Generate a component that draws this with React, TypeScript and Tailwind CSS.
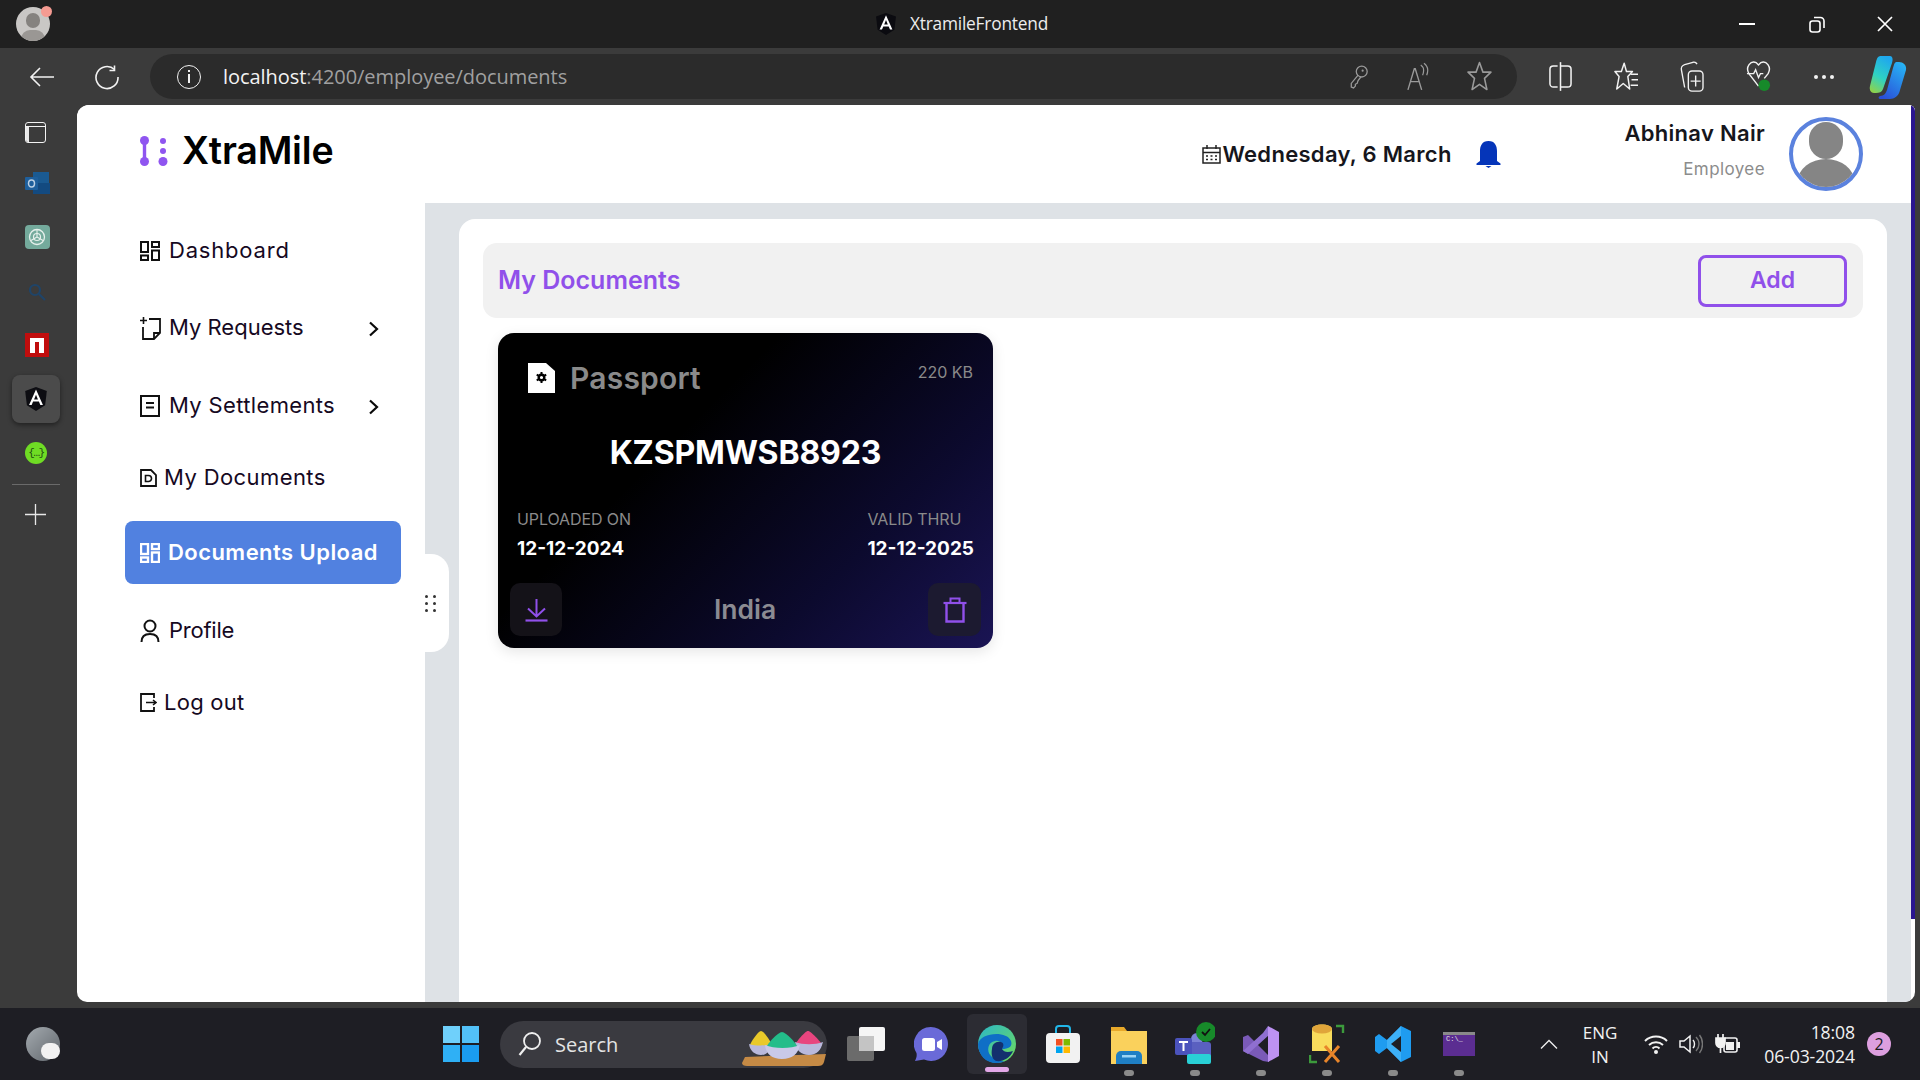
import React from "react";

const POP = "font-['Inter','Liberation_Sans',sans-serif]";

function Ic({ w, h, vb, children, cls = "" }: { w: number; h: number; vb?: string; children: React.ReactNode; cls?: string }) {
  return (
    <svg width={w} height={h} viewBox={vb ?? `0 0 ${w} ${h}`} fill="none" className={`shrink-0 ${cls}`}>
      {children}
    </svg>
  );
}

function AngularMark({ size, bg = "#0b0b10" }: { size: number; bg?: string }) {
  return (
    <Ic w={size} h={size} vb="0 0 24 24">
      <path d="M12 1 2 4.6l1.6 13.2L12 23l8.4-5.2L22 4.6z" fill={bg} />
      <path d="M12 3.2 5.6 17.6h2.4l1.3-3.2h5.4l1.3 3.2h2.4zm-1.8 9.2L12 8l1.8 4.4z" fill="#fff" />
    </Ic>
  );
}

function TitleBar() {
  return (
    <div className="h-[48px] bg-[#202020] flex items-center relative shrink-0">
      <div className="ml-[16px] relative w-[34px] h-[34px] rounded-full bg-[#c9c7c5] overflow-hidden">
        <div className="absolute left-[10px] top-[6px] w-[14px] h-[15px] rounded-full bg-[#85827f]" />
        <div className="absolute left-[5px] top-[23px] w-[24px] h-[18px] rounded-full bg-[#9a9794]" />
      </div>
      <div className="absolute left-[41px] top-[6px] w-[11px] h-[11px] rounded-full bg-[#f59b92]" />
      <div className="flex-1 flex items-center justify-center gap-[12px] pl-[156px]">
        <AngularMark size={24} />
        <span className="font-['Open_Sans',sans-serif] text-[17.3px] text-[#ededed] tracking-[-0.2px]">XtramileFrontend</span>
      </div>
      <div className="flex items-center">
        <div className="w-[68px] flex justify-center pr-[6px]">
          <div className="w-[16px] h-[2px] bg-white" />
        </div>
        <div className="w-[68px] flex justify-center pr-[2px]">
          <Ic w={16} h={18}>
            <rect x="1" y="6" width="10" height="11" rx="2.5" stroke="#fff" strokeWidth="1.6" />
            <path d="M5 2.5h6.5A3.5 3.5 0 0 1 15 6v7" stroke="#fff" strokeWidth="1.6" />
          </Ic>
        </div>
        <div className="w-[68px] flex justify-center pr-[2px]">
          <Ic w={16} h={16}>
            <path d="M1 1l14 14M15 1 1 15" stroke="#fff" strokeWidth="1.7" />
          </Ic>
        </div>
      </div>
    </div>
  );
}

function ToolBtn({ children, cls = "" }: { children: React.ReactNode; cls?: string }) {
  return <div className={`flex items-center justify-center ${cls}`}>{children}</div>;
}

function ToolBar() {
  const s = "#f2f2f2";
  const d = "#9a9a9a";
  return (
    <div className="h-[57px] bg-[#3b3b3b] flex items-start shrink-0 pt-[6px]">
      <ToolBtn cls="w-[84px] h-[45px]">
        <Ic w={26} h={22}>
          <path d="M25 11H2M11 2l-9 9 9 9" stroke={s} strokeWidth="1.6" />
        </Ic>
      </ToolBtn>
      <ToolBtn cls="w-[50px] h-[45px] -ml-[2px]">
        <Ic w={26} h={26}>
          <path d="M20.5 5.5A11 11 0 1 0 24 13" stroke={s} strokeWidth="1.6" />
          <path d="M20.5 1.5v5h-5" stroke={s} strokeWidth="1.6" />
        </Ic>
      </ToolBtn>
      <div className="ml-[18px] w-[1367px] h-[45px] rounded-full bg-[#2b2b2b] flex items-center">
        <div className="ml-[27px] w-[24px] h-[24px] rounded-full border-[1.5px] border-[#f2f2f2] flex items-center justify-center">
          <div className="flex flex-col items-center gap-[2px]">
            <div className="w-[2px] h-[2px] bg-[#f2f2f2]" />
            <div className="w-[1.5px] h-[9px] bg-[#f2f2f2]" />
          </div>
        </div>
        <div className="ml-[22px] font-['Open_Sans',sans-serif] text-[20px] tracking-[-0.05px]">
          <span className="text-[#f3f3f3]">localhost</span>
          <span className="text-[#a0a0a0]">:4200/employee/documents</span>
        </div>
        <div className="ml-auto flex items-center mr-[25px] gap-[38px]">
          <Ic w={20} h={26} vb="0 0 22 28">
            <circle cx="14" cy="8" r="6" stroke={d} strokeWidth="1.4" />
            <path d="M10 12 2.5 21v4l2.5 1 2-2v-2l2-1 1-3 3-4" stroke={d} strokeWidth="1.4" />
            <circle cx="15" cy="7" r="1.2" fill={d} />
          </Ic>
          <Ic w={22} h={30} vb="0 0 24 32">
            <path d="M1 30 8 7h1l7 23M4 21h10" stroke={d} strokeWidth="1.5" />
            <path d="M15 3c3 2 4 6 2 11M18.5 1c4 3 5 8 3 13" stroke={d} strokeWidth="1.3" />
          </Ic>
          <Ic w={25} h={33} vb="0 0 24 31">
            <path d="M12 2l3.3 9.3H23l-6.2 6 2.3 10.700L12 23l-7.100 5 2.300-10.700L1 11.300h7.700z" stroke={d} strokeWidth="1.5" strokeLinejoin="round" />
          </Ic>
        </div>
      </div>
      <div className="ml-[10px] flex h-[45px] items-center">
        <ToolBtn cls="w-[66px] h-[45px]">
          <Ic w={23} h={31} vb="0 0 24 32">
            <rect x="1" y="5" width="22" height="22" rx="3.5" stroke={s} strokeWidth="1.6" />
            <rect x="9" y="3" width="2.5" height="26" fill="#3b3b3b" />
            <path d="M12 1v30" stroke={s} strokeWidth="1.6" />
          </Ic>
        </ToolBtn>
        <ToolBtn cls="w-[66px] h-[45px]">
          <Ic w={24} h={32} vb="0 0 26 34">
            <path d="M11 2l2.5 9H20l-5 5.5L17 30l-7-6-7 6 2.5-13.500L1 11h7z" stroke={s} strokeWidth="1.6" strokeLinejoin="round" />
            <path d="M18 14h8M19 20h7M18 26h8" stroke={s} strokeWidth="1.5" />
          </Ic>
        </ToolBtn>
        <ToolBtn cls="w-[66px] h-[45px]">
          <Ic w={24} h={33} vb="0 0 26 36">
            <path d="M5 30 1.5 11a5 5 0 0 1 3.5-6l9-2.500a4 4 0 0 1 4.500 2" stroke={s} strokeWidth="1.5" />
            <rect x="9" y="12" width="16" height="22" rx="4" stroke={s} strokeWidth="1.5" />
            <path d="M17 17v12M11.500 23h11" stroke={s} strokeWidth="1.5" />
          </Ic>
        </ToolBtn>
        <ToolBtn cls="w-[66px] h-[45px]">
          <Ic w={25} h={35} vb="0 0 26 36">
            <path d="M13 28 3 15C-1 8 5 1 10.500 3.500L13 6l2.500-2.500C21 1 27 8 23 15l-4 5" stroke={s} strokeWidth="1.5" />
            <path d="M1 15h7l2-4 3 8 2-4h3" stroke={s} strokeWidth="1.4" />
            <circle cx="19" cy="27" r="6" fill="#178a2a" />
          </Ic>
        </ToolBtn>
        <ToolBtn cls="w-[66px] h-[45px]">
          <div className="flex gap-[4px]">
            <div className="w-[4px] h-[4px] rounded-full bg-[#f2f2f2]" />
            <div className="w-[4px] h-[4px] rounded-full bg-[#f2f2f2]" />
            <div className="w-[4px] h-[4px] rounded-full bg-[#f2f2f2]" />
          </div>
        </ToolBtn>
        <ToolBtn cls="w-[62px] h-[45px]">
          <Ic w={38} h={48}>
            <defs>
              <linearGradient id="cpa" x1="0.6" y1="0" x2="0.2" y2="1">
                <stop offset="0" stopColor="#1fa8ee" />
                <stop offset="0.55" stopColor="#2fd3c2" />
                <stop offset="1" stopColor="#8fd24a" />
              </linearGradient>
              <linearGradient id="cpb" x1="0.8" y1="0" x2="0.2" y2="1">
                <stop offset="0" stopColor="#27b4f5" />
                <stop offset="1" stopColor="#2a4fd8" />
              </linearGradient>
            </defs>
            <path d="M12 3h9c3 0 3 4 2 7l-9 26c-1 3-4 4-7 4H5c-3 0-5-3-4-7L7 9c1-4 2-6 5-6z" fill="url(#cpa)" />
            <path d="M27 9h3c4 0 8 3 7 8l-6 20c-1 6-6 9-10 9h-9c-3 0-3-2-1-3 4 0 6-3 7-6l6-22c1-3 1-5 3-6z" fill="url(#cpb)" />
          </Ic>
        </ToolBtn>
      </div>
    </div>
  );
}

function EdgeBar() {
  return (
    <div className="w-[77px] shrink-0 bg-[#3b3b3b] flex flex-col items-center pr-[5px]">
      <div className="mt-[16px] h-[22px] flex items-center -ml-[1px]">
        <div className="w-[21px] h-[21px] rounded-[3px] border-[1.5px] border-[#f2f2f2] relative bg-[#3b3b3b] overflow-hidden">
          <div className="absolute left-0 top-[3px] w-[3px] h-[16px] bg-[#e9e9e9]" />
          <div className="absolute left-0 top-[3px] right-0 h-[1.5px] bg-[#f2f2f2]" />
        </div>
      </div>
      <div className="mt-[28px] h-[24px] flex items-center ml-[2px]">
        <Ic w={25} h={24}>
          <rect x="8" y="1" width="16" height="22" fill="#1a5a92" />
          <path d="M8 12l17 0v11H8z" fill="#134a80" />
          <rect x="0" y="6" width="13" height="13" rx="1" fill="#1e5f9c" />
          <ellipse cx="6.5" cy="12.5" rx="3" ry="3.5" stroke="#bcd0e4" strokeWidth="1.5" />
        </Ic>
      </div>
      <div className="mt-[30px] h-[24px] flex items-center ml-[2px]">
        <div className="w-[25px] h-[24px] rounded-[4px] bg-[#74aa9c] flex items-center justify-center">
          <Ic w={20} h={20}>
            <circle cx="10" cy="10" r="7.5" stroke="#e6f0ec" strokeWidth="1.3" />
            <circle cx="10" cy="10" r="3.500" stroke="#e6f0ec" strokeWidth="1.2" />
            <path d="M10 2.500V10M3.500 13.700 10 10M16.500 13.700 10 10" stroke="#e6f0ec" strokeWidth="1.1" />
          </Ic>
        </div>
      </div>
      <div className="mt-[34px] h-[18px] flex items-center ml-[2px]">
        <Ic w={18} h={18}>
          <circle cx="7" cy="7" r="5" stroke="#1f4468" strokeWidth="2.2" />
          <path d="m11 11 6 6" stroke="#1f4468" strokeWidth="2.2" />
        </Ic>
      </div>
      <div className="mt-[32px] ml-[2px] w-[24px] h-[24px] bg-[#c00d0d] flex items-center justify-center">
        <div className="w-[14px] h-[15px] bg-white relative">
          <div className="absolute left-[5px] bottom-0 w-[4px] h-[11px] bg-[#c00d0d]" />
        </div>
      </div>
      <div className="mt-[18px] w-[48px] h-[48px] rounded-[8px] bg-[#4b4b4b] shadow-[0_2px_5px_rgba(0,0,0,0.45)] flex items-center justify-center">
        <AngularMark size={26} bg="#0d0d12" />
      </div>
      <div className="mt-[19px] w-[22px] h-[22px] rounded-full bg-[#6fdc24] flex items-center justify-center">
        <span className="font-['Liberation_Mono',monospace] text-[11px] leading-none text-[#1d4a12] tracking-[-1.5px]">{"{…}"}</span>
      </div>
      <div className="mt-[20px] w-[48px] h-[1px] bg-[#6a6a6a]" />
      <div className="mt-[19px] -ml-[1px] h-[21px] flex items-center">
        <Ic w={21} h={21}>
          <path d="M10.5 0v21M0 10.5h21" stroke="#e8e8e8" strokeWidth="1.3" />
        </Ic>
      </div>
    </div>
  );
}

function Chevron() {
  return (
    <Ic w={11} h={16} cls="absolute left-[243px] top-1/2 -translate-y-1/2 mt-[1px]">
      <path d="M2 1.500 9 8l-7 6.500" stroke="#0a0a0a" strokeWidth="2.200" />
    </Ic>
  );
}

function GridIcon({ color = "#111", size = 20, sw = 2 }: { color?: string; size?: number; sw?: number }) {
  return (
    <Ic w={size} h={size} vb="0 0 20 20">
      <rect x="1" y="1" width="7" height="10" stroke={color} strokeWidth={sw} />
      <rect x="12" y="1" width="7" height="5" stroke={color} strokeWidth={sw} />
      <rect x="1" y="14.5" width="7" height="4.500" stroke={color} strokeWidth={sw} />
      <rect x="12" y="9.5" width="7" height="9.500" stroke={color} strokeWidth={sw} />
    </Ic>
  );
}

function NavRow({ icon, label, cls = "", chevron = false, active = false, tx }: { icon: React.ReactNode; label: string; cls?: string; chevron?: boolean; active?: boolean; tx: string }) {
  return (
    <div className={`relative h-[63px] w-[276px] rounded-[8px] flex items-center pl-[15px] ${active ? "bg-[#5181e0] text-white" : "text-[#16091f]"} ${cls}`}>
      {icon}
      <span className={`${tx} whitespace-nowrap`}>{label}</span>
      {chevron && <Chevron />}
    </div>
  );
}

function Sidebar() {
  const t = "#111";
  return (
    <div className="w-[348px] shrink-0 pl-[48px] pt-[16px] flex flex-col">
      <NavRow tx="ml-[9px] text-[22px] tracking-[0.8px]" label="Dashboard" icon={<GridIcon />} />
      <NavRow
        cls="mt-[14px]"
        chevron
        tx="ml-[7px] text-[22px] tracking-[0px]"
        label="My Requests"
        icon={
          <Ic w={22} h={24}>
            <path d="M0 4.5h7M3.5 1v7" stroke={t} strokeWidth="1.6" />
            <path d="M9 3h11v14l-6 6H3V11" stroke={t} strokeWidth="1.8" />
            <path d="M14 23v-6h6" stroke={t} strokeWidth="1.8" />
          </Ic>
        }
      />
      <NavRow
        cls="mt-[15px]"
        chevron
        tx="ml-[9px] text-[22px] tracking-[0.35px]"
        label="My Settlements"
        icon={
          <Ic w={20} h={22}>
            <rect x="1" y="1" width="18" height="20" stroke={t} strokeWidth="2" />
            <path d="M6 8h8M6 12.5h8" stroke={t} strokeWidth="1.8" />
          </Ic>
        }
      />
      <NavRow
        cls="mt-[9px]"
        tx="ml-[7px] text-[22px] tracking-[0.4px]"
        label="My Documents"
        icon={
          <Ic w={17} h={18}>
            <path d="M1 1h10l5 5v11H1z" stroke={t} strokeWidth="1.8" />
            <path d="M5.5 6.500h3a2.500 2.500 0 0 1 0 6h-3z" stroke={t} strokeWidth="1.6" />
          </Ic>
        }
      />
      <NavRow
        cls="mt-[12px] font-semibold"
        active
        tx="ml-[8px] text-[22px] tracking-[0.45px]"
        label="Documents Upload"
        icon={<GridIcon color="#fff" sw={2.4} />}
      />
      <NavRow
        cls="mt-[15px]"
        tx="ml-[9px] text-[22px] tracking-[-0.25px]"
        label="Profile"
        icon={
          <Ic w={20} h={23}>
            <circle cx="10" cy="7" r="5.5" stroke={t} strokeWidth="2" />
            <path d="M1.500 23c0-5.500 3.500-8 8.500-8s8.500 2.500 8.500 8" stroke={t} strokeWidth="2" />
          </Ic>
        }
      />
      <NavRow
        cls="mt-[9px]"
        tx="ml-[7px] text-[22px] tracking-[0.25px]"
        label="Log out"
        icon={
          <Ic w={17} h={19}>
            <path d="M14 5V1H1v17h13v-4" stroke={t} strokeWidth="1.8" />
            <path d="M6 9.500h10M13 7l3 2.500-3 2.500" stroke={t} strokeWidth="1.5" />
          </Ic>
        }
      />
    </div>
  );
}

function Header() {
  return (
    <div className="h-[98px] bg-white flex items-center shrink-0 relative">
      <div className="ml-[63px] flex items-center -mt-[7px]">
        <Ic w={28} h={30}>
          <circle cx="4.5" cy="4.5" r="4.5" fill="#8f55f0" />
          <rect x="2.8" y="4" width="3.4" height="22" fill="#8f55f0" />
          <circle cx="4.5" cy="25.5" r="4.5" fill="#8f55f0" />
          <circle cx="23" cy="5" r="3" fill="#8f55f0" />
          <circle cx="23" cy="15" r="3" fill="#8f55f0" />
          <circle cx="23" cy="25.5" r="4.5" fill="#8f55f0" />
        </Ic>
        <span className="ml-[14px] text-[37.6px] font-semibold text-black tracking-[-0.2px] leading-none">XtraMile</span>
      </div>
      <div className="ml-[869px] flex items-center">
        <Ic w={19} h={19}>
          <rect x="1" y="3" width="17" height="15" stroke="#222" strokeWidth="1.5" />
          <path d="M1 7.5h17" stroke="#222" strokeWidth="1.5" />
          <path d="M5 0v4M14 0v4" stroke="#222" strokeWidth="1.5" />
          <path d="M4 11h2M8.500 11h2M13 11h2M4 14.500h2M8.500 14.500h2M13 14.500h2" stroke="#222" strokeWidth="1.3" />
        </Ic>
        <span className="ml-[1px] text-[22px] font-semibold text-[#16161c] tracking-[0.3px] whitespace-nowrap">Wednesday, 6 March</span>
        <Ic w={25} h={27} cls="ml-[24px]">
          <path d="M12.500 0C6 0 4 5 4 10v10l-3.500 2.500V24h24v-1.500L21 20V10c0-5-2-10-8.500-10z" fill="#0535b9" />
          <path d="M9.500 25h6l-3 2z" fill="#0535b9" />
        </Ic>
      </div>
      <div className="absolute right-[52px] top-0 h-full flex items-start">
        <div className="flex flex-col items-end mr-[24px] pt-[13px]">
          <span className="text-[22px] font-semibold text-[#16161c] tracking-[0.3px] leading-[30px]">Abhinav Nair</span>
          <span className="text-[17px] text-[#8c8c8c] leading-[24px] mt-[9px] tracking-[0.4px]">Employee</span>
        </div>
        <div className="w-[74px] h-[74px] mt-[12px] rounded-full border-[4px] border-[#5b82de] bg-white overflow-hidden relative">
          <div className="absolute left-[16px] top-[1px] w-[34px] h-[37px] rounded-full bg-[#858585]" />
          <div className="absolute left-[5px] top-[38px] w-[56px] h-[44px] rounded-[50%] bg-[#858585]" />
        </div>
      </div>
    </div>
  );
}

function DocCard() {
  return (
    <div className="w-[495px] h-[315px] rounded-[16px] bg-[linear-gradient(135deg,#000_0%,#000_35%,#0c0a2e_72%,#1a1454_100%)] shadow-[0_4px_14px_rgba(0,0,0,0.10)] flex flex-col relative ml-[15px] mt-[15px]">
      <div className="flex items-start h-[90px]">
        <div className="ml-[30px] mt-[27px] flex items-center">
          <Ic w={27} h={30}>
            <path d="M0 0h18l9 8v22H0z" fill="#fff" />
            <circle cx="13.5" cy="14.5" r="2.8" stroke="#000" strokeWidth="2.4" />
            <path d="M13.5 9v2.500M13.500 17.500V20M8.700 11.700l2.200 1.300M16 16l2.200 1.300M8.700 17.300l2.200-1.300M16 13l2.200-1.300" stroke="#000" strokeWidth="2" />
          </Ic>
          <span className="ml-[15px] text-[30px] leading-[36px] font-semibold text-[#8a8a8a] tracking-[0.2px]">Passport</span>
        </div>
        <span className="ml-auto mr-[20px] mt-[27px] text-[16px] leading-[24px] text-[#8a8a8a]">220 KB</span>
      </div>
      <div className="h-[50px] mt-[5px] flex items-center justify-center text-[32px] font-bold text-white tracking-[-0.15px]">KZSPMWSB8923</div>
      <div className="flex justify-between px-[19px] mt-[31px]">
        <div>
          <div className="text-[16px] leading-[20px] text-[#8a8a8a] tracking-[-0.1px]">UPLOADED ON</div>
          <div className="mt-[8px] text-[19px] leading-[24px] font-bold text-white">12-12-2024</div>
        </div>
        <div>
          <div className="text-[16px] leading-[20px] text-[#8a8a8a] tracking-[-0.1px]">VALID THRU</div>
          <div className="mt-[8px] text-[19px] leading-[24px] font-bold text-white">12-12-2025</div>
        </div>
      </div>
      <div className="absolute left-[12px] right-[12px] bottom-[12px] h-[53px] flex items-center justify-between">
        <div className="w-[52px] h-[53px] rounded-[10px] bg-[#141218] flex items-center justify-center">
          <Ic w={23} h={24}>
            <path d="M11.5 1v17M3 10.500l8.500 8 8.500-8" stroke="#9050ea" strokeWidth="2" />
            <path d="M0.5 22.500h22" stroke="#9050ea" strokeWidth="2.2" />
          </Ic>
        </div>
        <span className="text-[26.5px] font-semibold text-[#8b8b92]">India</span>
        <div className="w-[53px] h-[53px] rounded-[10px] bg-[#1c1a30] flex items-center justify-center">
          <Ic w={24} h={26}>
            <path d="M0.5 6h23" stroke="#9050ea" strokeWidth="2.2" />
            <path d="M7.500 6V1.500h9V6" stroke="#9050ea" strokeWidth="2" />
            <path d="M3.500 6v18.500h17V6" stroke="#9050ea" strokeWidth="2.4" />
          </Ic>
        </div>
      </div>
    </div>
  );
}

function Content() {
  return (
    <div className="flex-1 bg-[#dee2e6] pl-[34px] pr-[24px] pt-[16px] relative min-w-0">
      <div className="absolute left-0 top-[351px] w-[24px] h-[98px] bg-white rounded-r-[18px] flex items-center">
        <div className="grid grid-cols-2 gap-x-[5px] gap-y-[4px]">
          {[0, 1, 2, 3, 4, 5].map((i) => (
            <div key={i} className="w-[3px] h-[3px] rounded-full bg-[#333]" />
          ))}
        </div>
      </div>
      <div className="h-full bg-white rounded-t-[16px] px-[24px] pt-[24px]">
        <div className="h-[75px] bg-[#f1f1f1] rounded-[14px] flex items-center justify-between pl-[15px] pr-[16px]">
          <span className="text-[25px] font-semibold text-[#9050ea]">My Documents</span>
          <div className="w-[149px] h-[52px] rounded-[8px] border-[3px] border-[#9050ea] flex items-center justify-center text-[23px] font-semibold text-[#9050ea]">Add</div>
        </div>
        <DocCard />
      </div>
    </div>
  );
}

function App_() {
  return (
    <div className={`flex-1 flex min-h-0 bg-[#3b3b3b] ${POP}`}>
      <EdgeBar />
      <div className="flex-1 mb-[6px] mr-[5px] rounded-tl-[12px] rounded-tr-[6px] rounded-br-[10px] rounded-bl-[10px] bg-white overflow-hidden flex flex-col min-w-0 relative">
        <Header />
        <div className="flex-1 flex min-h-0 pr-[4px]">
          <Sidebar />
          <Content />
        </div>
        <div className="absolute right-0 top-0 w-[4px] h-[814px] bg-[#2a1690]" />
      </div>
    </div>
  );
}

function Dot() {
  return <div className="w-[10px] h-[6px] rounded-full bg-[#8a8a8a] absolute bottom-[4px] left-1/2 -translate-x-1/2" />;
}

function TaskCell({ children, dot = true }: { children: React.ReactNode; dot?: boolean }) {
  return (
    <div className="w-[66px] h-[72px] relative flex items-center justify-center">
      {children}
      {dot && <Dot />}
    </div>
  );
}

function Taskbar() {
  return (
    <div className="h-[72px] bg-[#1e1e24] flex items-center shrink-0 font-['Open_Sans',sans-serif]">
      <div className="ml-[26px] w-[34px] h-[34px] rounded-full bg-[linear-gradient(135deg,#a4aaaf,#60666c)] relative">
        <div className="absolute left-[15px] top-[16px] w-[19px] h-[16px] rounded-full bg-[#f2f2f2]" />
      </div>
      <div className="ml-[383px] grid grid-cols-2 gap-[2px] w-[36px] h-[36px]">
        <div className="bg-[#6fd0fb]" />
        <div className="bg-[#52c1f8]" />
        <div className="bg-[#2fb0f5]" />
        <div className="bg-[#1a9cf0]" />
      </div>
      <div className="ml-[21px] w-[327px] h-[47px] rounded-full bg-[#3a3a40] flex items-center relative">
        <Ic w={24} h={26} cls="ml-[18px]">
          <circle cx="14" cy="10" r="8" stroke="#efefef" strokeWidth="1.8" />
          <path d="M8 16 1.500 24" stroke="#efefef" strokeWidth="2.2" />
        </Ic>
        <span className="ml-[13px] mt-[2px] text-[20px] text-[#e4e4e4]">Search</span>
        <Ic w={86} h={44} cls="absolute left-[242px] top-[3px]">
          <path d="M3 33 84 30l-2 8c-1 3-3 4-6 4H5c-3 0-5-1-5-3z" fill="#c58a45" />
          <path d="M19 7c-3 0-10 11-11 14 0 2 22 2 22 0-1-3-8-14-11-14z" fill="#e9c92a" />
          <path d="M7 20c1 7 6 11 12 11s9-4 11-11c-7 2-16 2-23 0z" fill="#b9b9dc" />
          <path d="M66 7c-3 0-12 11-13 14 0 2 27 2 27 0-1-3-11-14-14-14z" fill="#e8457f" />
          <path d="M53 18c1 8 6 13 14 13s12-5 14-13c-8 3-20 3-28 0z" fill="#b9b9dc" />
          <path d="M40 8c-4 0-15 12-16 16 0 3 32 3 32 0-1-4-12-16-16-16z" fill="#23bd8a" />
          <path d="M23 21c1 9 7 14 17 14s16-5 18-14c-9 4-26 4-35 0z" fill="#c9c9e8" />
        </Ic>
      </div>
      <div className="ml-[6px] w-[66px] h-[72px] flex items-center justify-center">
        <Ic w={38} h={36}>
          <rect x="12" y="1" width="26" height="24" rx="2" fill="#f5f5f5" />
          <rect x="0" y="10" width="27" height="25" rx="2" fill="#6b6b6b" />
          <rect x="12" y="10" width="15" height="15" fill="#c4c4c4" />
        </Ic>
      </div>
      <div className="w-[64px] h-[72px] flex items-center justify-center">
        <Ic w={34} h={34}>
          <path d="M17 0a17 17 0 1 1-7 32.500L1 34c1.500-3 2-5 1.500-8A17 17 0 0 1 17 0z" fill="#6a6ad8" />
          <rect x="8" y="11" width="13" height="13" rx="2.5" fill="#fff" />
          <path d="M23 15l5-3v11l-5-3z" fill="#fff" />
        </Ic>
      </div>
      <div className="ml-[4px] w-[60px] h-[60px] rounded-[6px] bg-[#2c2c33] flex items-center justify-center relative">
        <Ic w={38} h={38}>
          <defs>
            <linearGradient id="eg" x1="0" y1="0" x2="1" y2="1">
              <stop offset="0" stopColor="#2bb6c8" />
              <stop offset="1" stopColor="#6fdc5a" />
            </linearGradient>
          </defs>
          <circle cx="19" cy="19" r="19" fill="url(#eg)" />
          <path d="M0 19C2 8 28 5 33 16c2 6-3 8-9 8 3-5-2-9-7-8C10 17 8 26 13 31c3 3 9 6 14 5-4 2-7 2-9 2C8 38 0 30 0 19z" fill="#0f6fc6" />
          <path d="M14 24c0-5 4-8 9-7 3 1 3 4 1 7 2 3 5 4 11 2-3 7-10 11-17 10-4-2-5-7-4-12z" fill="#13306e" />
        </Ic>
        <div className="absolute bottom-[2px] left-[18px] w-[24px] h-[5px] rounded-full bg-[#e3a8e8]" />
      </div>
      <div className="ml-[3px] flex">
        <TaskCell dot={false}>
          <Ic w={36} h={40}>
            <path d="M11 10V5a3 3 0 0 1 3-3h8a3 3 0 0 1 3 3v5" stroke="#21b6e8" strokeWidth="2" />
            <rect x="1" y="9" width="34" height="30" rx="4" fill="#f2f2f2" />
            <rect x="11" y="15" width="6.5" height="6.5" fill="#f25022" />
            <rect x="18.5" y="15" width="6.5" height="6.5" fill="#7fba00" />
            <rect x="11" y="22.5" width="6.5" height="6.5" fill="#00a4ef" />
            <rect x="18.5" y="22.5" width="6.5" height="6.5" fill="#ffb900" />
          </Ic>
        </TaskCell>
        <TaskCell>
          <Ic w={36} h={40}>
            <path d="M0 3h13l3 4h20v33H0z" fill="#e8a92a" />
            <rect x="0" y="7" width="36" height="33" fill="#fad15c" />
            <path d="M10 27h16a5 5 0 0 1 5 5v8H5v-8a5 5 0 0 1 5-5z" fill="#1f7fc4" />
            <rect x="11" y="31" width="14" height="2.5" fill="#9ad4f5" />
          </Ic>
        </TaskCell>
        <TaskCell>
          <Ic w={40} h={44}>
            <circle cx="22" cy="17" r="6" fill="#7b83d6" />
            <rect x="12" y="20" width="24" height="18" rx="3" fill="#5a60c0" />
            <rect x="0" y="16" width="17" height="17" rx="2" fill="#4b53bc" />
            <path d="M4 20h9M8.500 20v9" stroke="#fff" strokeWidth="2" />
            <circle cx="31" cy="10" r="10" fill="#178a2a" />
            <path d="m27 10 3 3 5-6" stroke="#111" strokeWidth="1.8" />
            <rect x="12" y="32" width="24" height="10" rx="2" fill="#29d0d6" />
          </Ic>
        </TaskCell>
        <TaskCell>
          <Ic w={36} h={36}>
            <path d="M0 11l5-2 20 20 1 7-6-1L0 25z" fill="#7a5ab8" />
            <path d="M0 25 20 7l5-7 1 9L5 28z" fill="#8f6fd0" />
            <path d="M25 0l11 6v24l-11 6z" fill="#bd92f2" />
          </Ic>
        </TaskCell>
        <TaskCell>
          <Ic w={36} h={40}>
            <path d="M3 5c0-6 20-6 20 0v22H3z" fill="#f9dc5c" />
            <ellipse cx="13" cy="5" rx="10" ry="4.5" fill="#e0a53a" />
            <path d="M27 2h7v7M1 31v7h7" stroke="#3c9a3c" strokeWidth="2.4" />
            <path d="M16 22l14 16M30 22 16 38" stroke="#e8852a" strokeWidth="3" />
          </Ic>
        </TaskCell>
        <TaskCell>
          <Ic w={36} h={36}>
            <path d="M26 0l10 5v26l-10 5L12 22l-8 6-4-3V11l4-3 8 6z" fill="#1f9cf0" />
            <path d="M26 0v36L12 22V14z" fill="#3db0f7" />
            <path d="M26 10 16 18l10 8z" fill="#1e1e24" />
          </Ic>
        </TaskCell>
        <TaskCell>
          <div className="w-[32px] h-[24px] bg-[#5b2d91] border-t-[3px] border-[#8a8a8a] pl-[3px]">
            <span className="font-['Liberation_Mono',monospace] text-[7px] leading-[8px] block text-[#e5e5e5]">C:\_</span>
          </div>
        </TaskCell>
      </div>
      <div className="ml-[47px] w-[20px] flex justify-center">
        <Ic w={18} h={10}>
          <path d="M1 9.500 9 1.500l8 8" stroke="#f0f0f0" strokeWidth="1.3" />
        </Ic>
      </div>
      <div className="ml-[21px] w-[40px] mt-[2px] flex flex-col items-center text-[17px] leading-[24px] text-[#f2f2f2]">
        <span>ENG</span>
        <span>IN</span>
      </div>
      <div className="ml-[24px] flex items-center gap-[11px]">
        <Ic w={24} h={20}>
          <path d="M1 7a16 16 0 0 1 22 0M5 11a10.500 10.500 0 0 1 14 0M8.500 14.500a5 5 0 0 1 7 0" stroke="#f2f2f2" strokeWidth="2" />
          <circle cx="12" cy="18" r="2" fill="#f2f2f2" />
        </Ic>
        <Ic w={24} h={20}>
          <path d="M1 7h4l6-5v16l-6-5H1z" stroke="#f2f2f2" strokeWidth="1.5" />
          <path d="M14 6c2 2 2 6 0 8" stroke="#f2f2f2" strokeWidth="1.4" />
          <path d="M17 3c4 4 4 10 0 14M20.500 1c4 5 4 13 0 18" stroke="#777" strokeWidth="1.4" />
        </Ic>
        <Ic w={26} h={20} cls="ml-[1px]">
          <path d="M3 0v4M8 0v4M1 4h9v5a4.500 4.500 0 0 1-9 0zM5.500 13v6" stroke="#f2f2f2" strokeWidth="1.7" fill="#f2f2f2" />
          <rect x="9" y="4" width="13" height="14" rx="2" stroke="#f2f2f2" strokeWidth="1.6" />
          <rect x="11" y="8" width="8" height="8" fill="#f2f2f2" />
          <rect x="22" y="8" width="3" height="6" fill="#f2f2f2" />
        </Ic>
      </div>
      <div className="ml-auto flex flex-col items-end text-[17.6px] leading-[24px] text-[#f2f2f2] tracking-[-0.1px]">
        <span>18:08</span>
        <span>06-03-2024</span>
      </div>
      <div className="ml-[12px] mr-[29px] w-[24px] h-[24px] rounded-full bg-[#dd9fdf] flex items-center justify-center text-[16px] text-[#1a1a1a]">2</div>
    </div>
  );
}

export default function App() {
  return (
    <div className="w-[1920px] h-[1080px] flex flex-col overflow-hidden">
      <TitleBar />
      <ToolBar />
      <App_ />
      <Taskbar />
    </div>
  );
}
